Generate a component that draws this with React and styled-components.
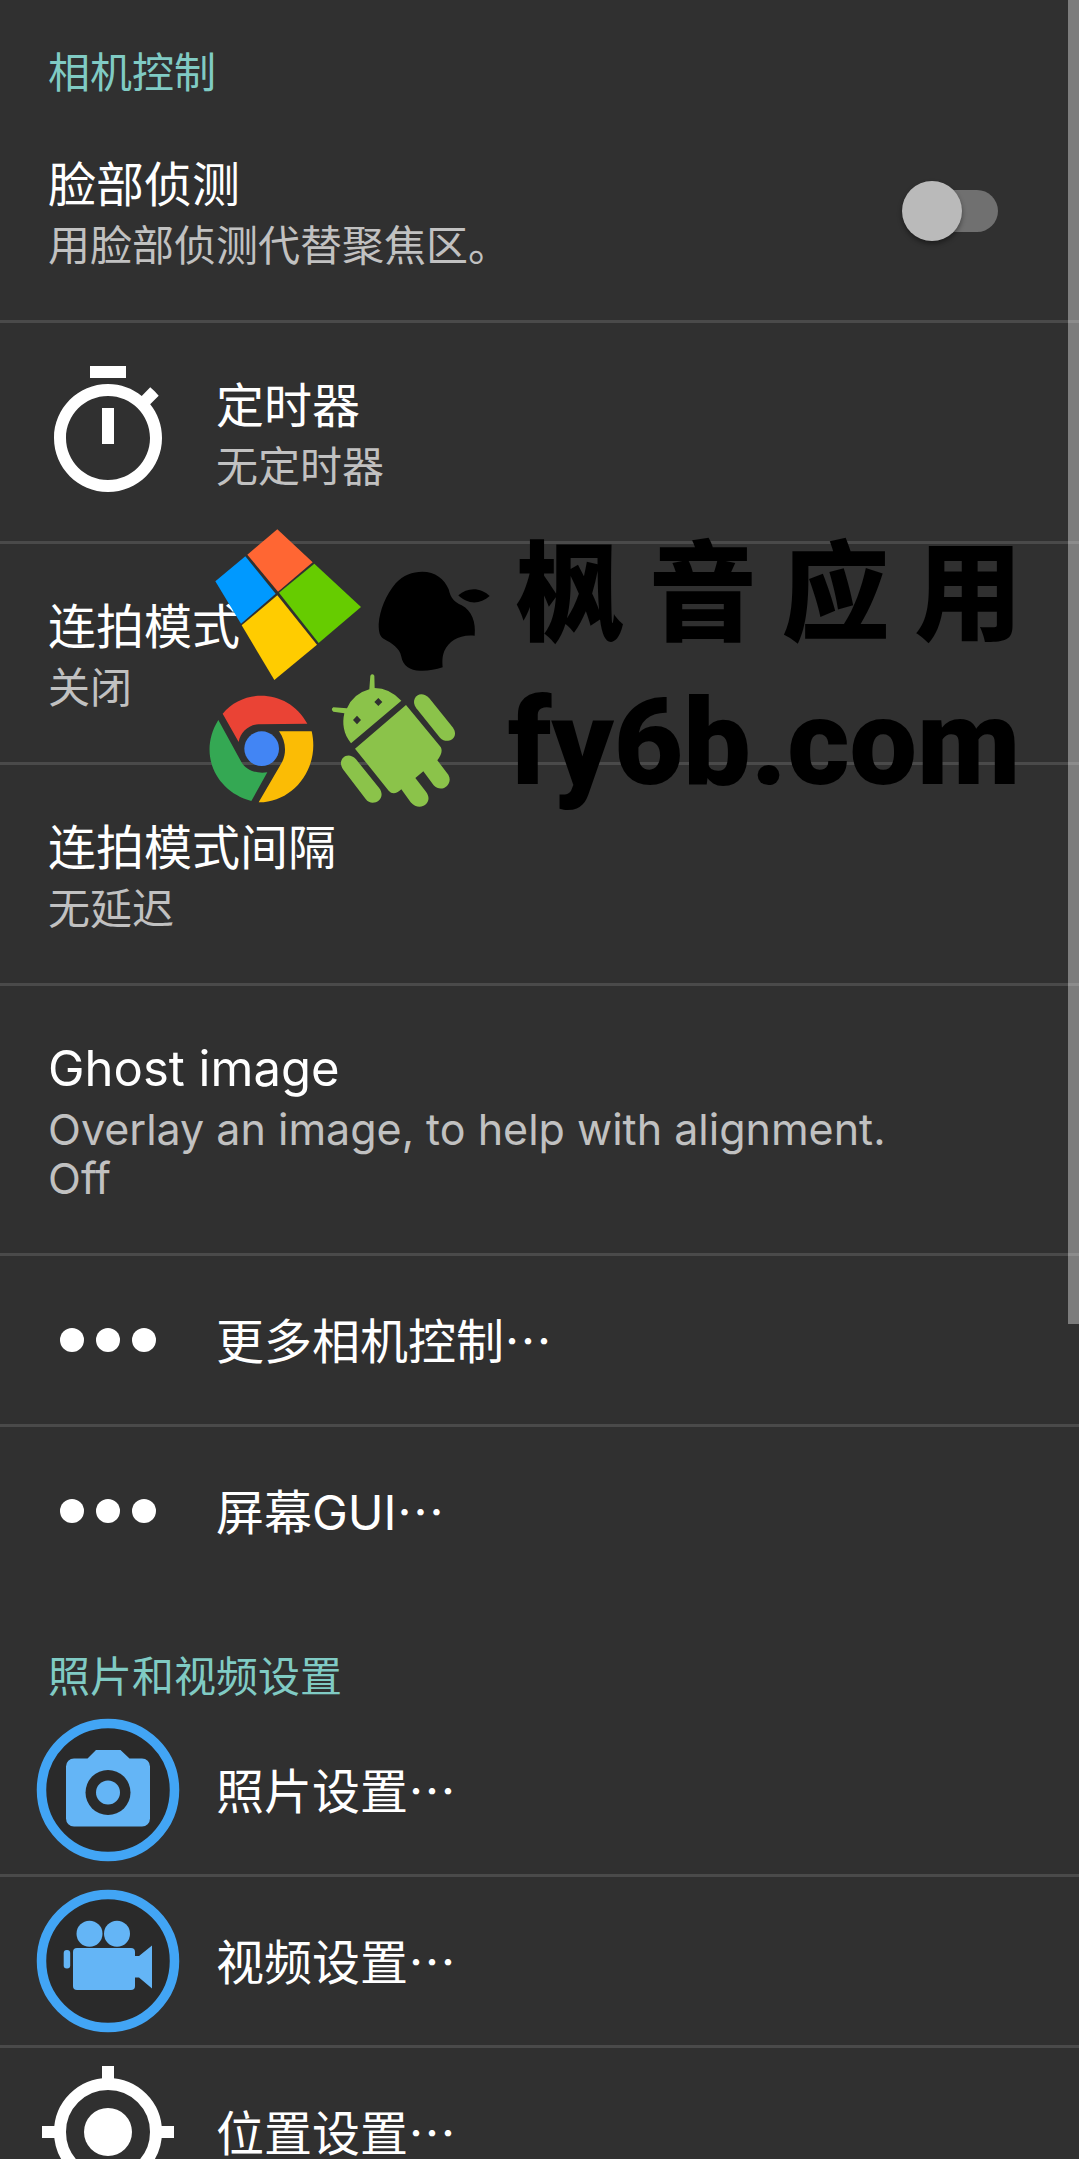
import styled, { createGlobalStyle } from "styled-components";

const GlobalStyle = createGlobalStyle`
  * {
    box-sizing: border-box;
  }
  body {
    margin: 0;
    background: #303030;
    color: #fff;
    font-family: Inter, "Noto Sans CJK SC", sans-serif;
  }
`;
const Page = styled.main`
  position: relative;
  height: 100vh;
  overflow: hidden;
`;
const SectionTitle = styled.h2`
  margin: 0;
  padding: ${({ $first }) => ($first ? "48px" : "57px")} 48px 5px;
  color: #80cbc4;
  font-size: 42px;
  font-weight: 400;
  line-height: 49px;
`;
const List = styled.ul`
  margin: 0;
  padding: 0;
  list-style: none;
`;
const Item = styled.li`
  & + & {
    border-top: 3px solid #4a4a4a;
  }
`;
const ItemButton = styled.button`
  display: flex;
  align-items: center;
  gap: 36px;
  width: 100%;
  min-height: 168px;
  padding: ${({ $icon }) => ($icon ? "0 36px" : "0 48px")};
  border: 0;
  background: none;
  color: inherit;
  font: inherit;
  text-align: left;
`;
const SwitchLabel = styled.label`
  display: flex;
  align-items: center;
  justify-content: space-between;
  padding: 0 81px 0 48px;
`;
const Texts = styled.span`
  display: flex;
  flex-direction: column;
  gap: 3px;
  padding: ${({ $single }) => ($single ? "0" : "50px 0")};
`;
const Title = styled.span`
  font-size: 48px;
  line-height: 66px;
  &:lang(en) {
    font-size: 49px;
  }
`;
const Summary = styled.span`
  color: #c1c1c1;
  font-size: 42px;
  line-height: 49px;
  white-space: pre-line;
  &:lang(en) {
    font-size: 43px;
  }
`;
const Dots = styled.span`
  font-family: "Noto Sans CJK SC", sans-serif;
`;
const Switch = styled.input`
  appearance: none;
  position: relative;
  flex: none;
  width: 96px;
  height: 60px;
  margin: 0;
  &::before {
    content: "";
    position: absolute;
    inset: 9px 0 9px 6px;
    border-radius: 21px;
    background: #707070;
  }
  &::after {
    content: "";
    position: absolute;
    top: 0;
    left: 0;
    width: 60px;
    height: 60px;
    border-radius: 50%;
    background: #bababa;
    box-shadow: 0 3px 5px rgba(0, 0, 0, 0.4);
  }
  &:checked::after {
    left: 36px;
  }
`;
const Icon = styled.svg`
  flex: none;
  width: 144px;
  height: 144px;
  fill: #fff;
`;
const ScrollThumb = styled.div`
  position: absolute;
  top: 0;
  right: 0;
  width: 11px;
  height: 1324px;
  background: rgba(255, 255, 255, 0.37);
`;
const Watermark = styled.div`
  position: absolute;
  top: 510px;
  left: 190px;
  display: flex;
  gap: 8px;
  color: #000;
  pointer-events: none;
`;
const Logos = styled.svg`
  width: 310px;
  height: 310px;
`;
const Brand = styled.div`
  display: flex;
  flex-direction: column;
  gap: 8px;
  font-weight: 900;
  line-height: 150px;
  white-space: nowrap;
`;
const BrandName = styled.span`
  padding-left: 8px;
  font-family: "Noto Sans CJK SC", sans-serif;
  font-size: 108px;
`;
const BrandSite = styled.span`
  font-family: Roboto, sans-serif;
  font-size: 120px;
`;

function TimerIcon() {
  return (
    <Icon viewBox="0 0 24 24" aria-hidden="true">
      <path d="M15 1H9v2h6V1zm-4 13h2V8h-2v6zm8.03-6.61l1.42-1.42c-.43-.51-.9-.99-1.41-1.41l-1.42 1.42C16.07 4.74 14.12 4 12 4c-4.97 0-9 4.03-9 9s4.02 9 9 9 9-4.03 9-9c0-2.12-.74-4.07-1.97-5.61zM12 20c-3.87 0-7-3.13-7-7s3.13-7 7-7 7 3.13 7 7-3.13 7-7 7z" />
    </Icon>
  );
}

function MoreIcon() {
  return (
    <Icon viewBox="0 0 24 24" aria-hidden="true">
      <circle cx="6" cy="12" r="2" />
      <circle cx="12" cy="12" r="2" />
      <circle cx="18" cy="12" r="2" />
    </Icon>
  );
}

function PhotoIcon() {
  return (
    <Icon viewBox="0 0 144 144" aria-hidden="true">
      <circle cx="72" cy="72" r="66.5" fill="#2a2a2a" stroke="#42a5f5" strokeWidth="9.5" />
      <path
        fill="#64b5f6"
        d="M38 40.5h13.5l8.5-8.5h24.5l9 8.5H106a8 8 0 0 1 8 8v52a8 8 0 0 1-8 8H38a8 8 0 0 1-8-8v-52a8 8 0 0 1 8-8z"
      />
      <circle cx="72" cy="74.5" r="22.5" fill="#2a2a2a" />
      <circle cx="72" cy="74.5" r="12" fill="#64b5f6" />
    </Icon>
  );
}

function VideoIcon() {
  return (
    <Icon viewBox="0 0 144 144" aria-hidden="true">
      <circle cx="72" cy="72" r="66.5" fill="#2a2a2a" stroke="#42a5f5" strokeWidth="9.5" />
      <g fill="#64b5f6">
        <circle cx="53.5" cy="44.7" r="13" />
        <circle cx="81" cy="44.7" r="13" />
        <rect x="27.7" y="61" width="6.5" height="18.5" rx="3" />
        <rect x="37" y="59" width="62" height="42" rx="4" />
        <path d="M98 67h5l13-10.5v43L103 88.5h-5z" />
      </g>
    </Icon>
  );
}

function LocationIcon() {
  return (
    <Icon viewBox="0 0 24 24" aria-hidden="true">
      <circle cx="12" cy="12" r="4" />
      <circle cx="12" cy="12" r="8" fill="none" stroke="#fff" strokeWidth="2" />
      <path d="M11 1h2v3h-2zM11 20h2v3h-2zM1 11h3v2H1zM20 11h3v2h-3z" />
    </Icon>
  );
}

function BrandLogos() {
  return (
    <Logos viewBox="0 0 930 930" aria-hidden="true">
      <path fill="#ff6633" d="M262 58L368 157 264 245 172 134z" />
      <path fill="#0099ff" d="M166 139L257 251 153 341 76 214z" />
      <path fill="#66cc00" d="M373 161L513 291 386 399 267 248z" />
      <path fill="#ffcc00" d="M262 256L381 404 253 510 155 346z" />

      <path d="M697 185C735 185 764 207 776 238C782 264 792 276 815 286C846 303 858 336 854 377C810 372 777 392 763 423C756 441 757 455 758 472C735 480 711 483 690 482C660 481 638 466 634 440C629 414 606 400 582 387C569 380 566 367 566 343C569 300 588 254 617 220C640 195 667 185 697 185z" />
      <path d="M805 256C832 231 872 231 899 258C871 284 832 284 805 256z" />

      <path fill="#ea4335" d="M98 611C164 530 298 540 352 641L205 643C174 645 151 668 146 696z" />
      <path fill="#34a853" d="M85 630L154 756C169 781 199 792 232 787L184 873C76 844 23 730 85 630z" />
      <path fill="#fbbc05" d="M267 664H365C391 774 310 878 206 877L276 757C291 727 287 692 267 664z" />
      <circle cx="215" cy="716" r="52" fill="#4285f4" />

      <g fill="#8bc34a">
        <path d="M483 700C460 671 456 640 463 610L430 605Q421 598 430 592L471 595Q490 551 538 538L541 497Q547 489 553 497L554 534Q598 534 634 572z" />
        <path d="M648 585L752 711Q761 726 742 751L775 794C791 821 756 852 731 826L700 784 676 804 708 845C733 878 690 909 662 877L634 838Q611 859 596 842L495 716z" />
        <path d="M679 595C657 564 692 535 718 565L788 652C811 684 772 706 750 683z" />
        <path d="M460 779C438 750 472 720 498 748L568 835C592 868 546 894 527 867z" />
      </g>
      <path fill="#303030" d="M565 564l12 12-12 12-12-12zM501 617l12 13-12 13-12-13z" />
    </Logos>
  );
}

const icons = {
  timer: TimerIcon,
  more: MoreIcon,
  photo: PhotoIcon,
  video: VideoIcon,
  location: LocationIcon,
};

const cameraItems = [
  { title: "定时器", summary: "无定时器", icon: "timer" },
  { title: "连拍模式", summary: "关闭" },
  { title: "连拍模式间隔", summary: "无延迟" },
  {
    title: "Ghost image",
    summary: "Overlay an image, to help with alignment.\nOff",
    lang: "en",
  },
  { title: "更多相机控制", icon: "more", opens: true },
  { title: "屏幕GUI", icon: "more", opens: true },
];

const mediaItems = [
  { title: "照片设置", icon: "photo", opens: true },
  { title: "视频设置", icon: "video", opens: true },
  { title: "位置设置", icon: "location", opens: true },
];

function Preference({ title, summary, icon, opens, lang }) {
  const ItemIcon = icons[icon];
  return (
    <Item lang={lang}>
      <ItemButton type="button" $icon={icon}>
        {ItemIcon && <ItemIcon />}
        <Texts $single={!summary}>
          <Title>
            {title}
            {opens && <Dots>…</Dots>}
          </Title>
          {summary && <Summary>{summary}</Summary>}
        </Texts>
      </ItemButton>
    </Item>
  );
}

export default function App() {
  return (
    <Page lang="zh-CN">
      <GlobalStyle />
      <SectionTitle $first>相机控制</SectionTitle>
      <List>
        <Item>
          <SwitchLabel>
            <Texts>
              <Title>脸部侦测</Title>
              <Summary>用脸部侦测代替聚焦区。</Summary>
            </Texts>
            <Switch type="checkbox" role="switch" />
          </SwitchLabel>
        </Item>
        {cameraItems.map((item) => (
          <Preference key={item.title} {...item} />
        ))}
      </List>
      <SectionTitle>照片和视频设置</SectionTitle>
      <List>
        {mediaItems.map((item) => (
          <Preference key={item.title} {...item} />
        ))}
      </List>
      <Watermark>
        <BrandLogos />
        <Brand>
          <BrandName>枫 音 应 用</BrandName>
          <BrandSite>fy6b.com</BrandSite>
        </Brand>
      </Watermark>
      <ScrollThumb />
    </Page>
  );
}
